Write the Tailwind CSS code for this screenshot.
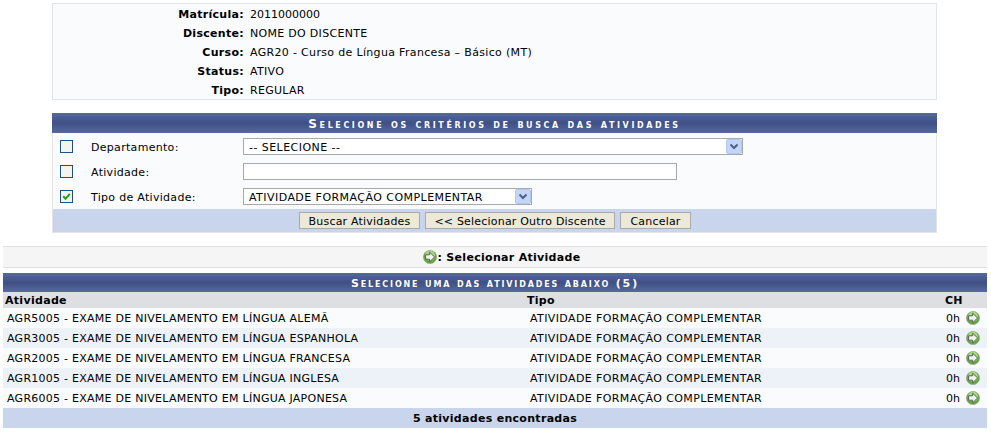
<!DOCTYPE html>
<html lang="pt">
<head>
  <meta charset="UTF-8" />
  <title>Selecionar Atividade</title>
  <script src="https://cdn.jsdelivr.net/npm/@tailwindcss/browser@4"></script>
</head>
<body class="bg-white text-black text-[11px] leading-[14px] tracking-[0.3px] font-['DejaVu_Sans',Verdana,sans-serif] w-[991px] h-[432px] overflow-hidden">
  <svg class="hidden">
    <symbol id="go" viewBox="0 0 14 14">
      <circle cx="7" cy="7" r="6.6" fill="#62a83f" stroke="#9aa894" stroke-width="0.7"/>
      <circle cx="7" cy="5.8" r="5" fill="#a9d983"/>
      <path d="M6.6 2.2 L11.6 7 L6.6 11.8 V9.2 H2.6 V4.8 H6.6 Z" fill="#f4f4f0" stroke="#55634f" stroke-width="1" stroke-linejoin="round"/>
    </symbol>
    <symbol id="arrow" viewBox="0 0 16 15">
      <rect x="0.5" y="0.5" width="15" height="14" rx="1.5" fill="#c3d5f8" stroke="#b4c8ee"/>
      <path d="M4.5 5.5 L8 9 L11.5 5.5" fill="none" stroke="#4d6185" stroke-width="2"/>
    </symbol>
  </svg>

  <div class="pt-[3px] pl-[52px]">
    <!-- dados do discente -->
    <div class="w-[885px] h-[97px] bg-[#f9fbfd] border border-[#e2e4e6] pt-[1px]">
      <div class="grid grid-cols-[191px_1fr] gap-x-[6px] auto-rows-[19px] items-center">
        <b class="text-right">Matrícula:</b><span class="tracking-normal">2011000000</span>
        <b class="text-right">Discente:</b><span>NOME DO DISCENTE</span>
        <b class="text-right">Curso:</b><span class="tracking-[0.33px]">AGR20 - Curso de Língua Francesa – Básico (MT)</span>
        <b class="text-right">Status:</b><span>ATIVO</span>
        <b class="text-right">Tipo:</b><span>REGULAR</span>
      </div>
    </div>

    <!-- criterios de busca -->
    <form class="w-[885px] h-[120px] mt-[13px] border-x border-b border-[#e2e4e6] bg-[#f9fbfd]">
      <div class="-mx-px h-[20px] pt-[2px] flex items-center justify-center text-white font-bold tracking-[2.6px] [font-variant:small-caps] text-[12px] bg-[linear-gradient(#56699c,#3e5085_50%,#56699c)]">Selecione os critérios de busca das atividades</div>
      <div class="pt-[5px] h-[76px]">
        <div class="flex items-center h-[17px] mb-[8px]">
          <input type="checkbox" class="appearance-none size-[13px] ml-[7px] border border-[#1c5180] bg-[#f4f4ee]">
          <label class="ml-[18px] w-[152px] pt-[2px]">Departamento:</label>
          <div class="relative w-[500px] h-[17px]">
            <select class="appearance-none w-full h-full bg-white border border-[#a9a9a9] pl-[5px] pt-[2px] text-[11px] tracking-[0.45px]"><option>-- SELECIONE --</option></select>
            <svg class="absolute right-[1px] top-[1px] w-[16px] h-[15px]"><use href="#arrow"/></svg>
          </div>
        </div>
        <div class="flex items-center h-[17px] mb-[8px]">
          <input type="checkbox" class="appearance-none size-[13px] ml-[7px] border border-[#1c5180] bg-[#f4f4ee]">
          <label class="ml-[18px] w-[152px] pt-[2px]">Atividade:</label>
          <input type="text" class="w-[434px] h-[17px] bg-white border border-[#a9a9a9]">
        </div>
        <div class="flex items-center h-[17px]">
          <span class="relative size-[13px] ml-[7px]">
            <input type="checkbox" checked class="appearance-none block size-[13px] border border-[#1c5180] bg-[#f4f4ee]">
            <svg class="absolute left-[2px] top-[2px] size-[9px]" viewBox="0 0 9 9"><path d="M1.2 4.2 L3.6 6.8 L7.8 1.8" fill="none" stroke="#21a121" stroke-width="2"/></svg>
          </span>
          <label class="ml-[18px] w-[152px] pt-[2px]">Tipo de Atividade:</label>
          <div class="relative w-[289px] h-[17px]">
            <select class="appearance-none w-full h-full bg-white border border-[#a9a9a9] pl-[5px] pt-[2px] text-[11px] tracking-[0.45px]"><option>ATIVIDADE FORMAÇÃO COMPLEMENTAR</option></select>
            <svg class="absolute right-[1px] top-[1px] w-[16px] h-[15px]"><use href="#arrow"/></svg>
          </div>
        </div>
      </div>
      <div class="h-[23px] bg-[#c8d5ec] flex items-center pl-[246px] gap-[5px]">
        <button type="button" class="h-[17px] w-[121px] pt-[2px] bg-[#ece9d8] border border-[#a9a9a9] text-[11px] tracking-[0.2px]">Buscar Atividades</button>
        <button type="button" class="h-[17px] w-[190px] pt-[2px] bg-[#ece9d8] border border-[#a9a9a9] text-[11px] tracking-[0.2px]">&lt;&lt; Selecionar Outro Discente</button>
        <button type="button" class="h-[17px] w-[71px] pt-[2px] bg-[#ece9d8] border border-[#a9a9a9] text-[11px] tracking-[0.2px]">Cancelar</button>
      </div>
    </form>
  </div>

  <div class="pl-[3px] w-[987px]">
    <!-- legenda -->
    <div class="mt-[13px] h-[22px] pl-[13px] bg-[#f5f5f5] border-y border-[#e2e2e2] flex items-center justify-center gap-[1px] font-bold">
      <svg class="size-[14px]"><use href="#go"/></svg><span class="pt-[2px]">: Selecionar Atividade</span>
    </div>

    <!-- resultado -->
    <div class="mt-[5px]">
      <div class="h-[19px] pt-[2px] flex items-center justify-center text-white font-bold tracking-[1.85px] [font-variant:small-caps] text-[11px] bg-[linear-gradient(#56699c,#3e5085_50%,#56699c)]">Selecione uma das atividades abaixo (5)</div>
      <div class="h-[16px] pt-[2px] bg-[#dedfe3] font-bold grid grid-cols-[522px_1fr_42px] items-center pl-[2px]">
        <span>Atividade</span><span>Tipo</span><span>CH</span>
      </div>
      <div class="h-[20px] bg-[#f9fbfd] grid grid-cols-[523px_1fr_auto_21px] items-center pl-[4px]">
        <span class="pt-[2px] tracking-[0.26px]">AGR5005 - EXAME DE NIVELAMENTO EM LÍNGUA ALEMÃ</span><span class="pt-[2px] tracking-[0.39px]">ATIVIDADE FORMAÇÃO COMPLEMENTAR</span><span class="pt-[2px] mr-[6px] tracking-normal">0h</span>
        <svg class="size-[14px]"><use href="#go"/></svg>
      </div>
      <div class="h-[20px] bg-[#edf2f9] grid grid-cols-[523px_1fr_auto_21px] items-center pl-[4px]">
        <span class="pt-[2px] tracking-[0.26px]">AGR3005 - EXAME DE NIVELAMENTO EM LÍNGUA ESPANHOLA</span><span class="pt-[2px] tracking-[0.39px]">ATIVIDADE FORMAÇÃO COMPLEMENTAR</span><span class="pt-[2px] mr-[6px] tracking-normal">0h</span>
        <svg class="size-[14px]"><use href="#go"/></svg>
      </div>
      <div class="h-[20px] bg-[#f9fbfd] grid grid-cols-[523px_1fr_auto_21px] items-center pl-[4px]">
        <span class="pt-[2px] tracking-[0.26px]">AGR2005 - EXAME DE NIVELAMENTO EM LÍNGUA FRANCESA</span><span class="pt-[2px] tracking-[0.39px]">ATIVIDADE FORMAÇÃO COMPLEMENTAR</span><span class="pt-[2px] mr-[6px] tracking-normal">0h</span>
        <svg class="size-[14px]"><use href="#go"/></svg>
      </div>
      <div class="h-[20px] bg-[#edf2f9] grid grid-cols-[523px_1fr_auto_21px] items-center pl-[4px]">
        <span class="pt-[2px] tracking-[0.26px]">AGR1005 - EXAME DE NIVELAMENTO EM LÍNGUA INGLESA</span><span class="pt-[2px] tracking-[0.39px]">ATIVIDADE FORMAÇÃO COMPLEMENTAR</span><span class="pt-[2px] mr-[6px] tracking-normal">0h</span>
        <svg class="size-[14px]"><use href="#go"/></svg>
      </div>
      <div class="h-[20px] bg-[#f9fbfd] grid grid-cols-[523px_1fr_auto_21px] items-center pl-[4px]">
        <span class="pt-[2px] tracking-[0.26px]">AGR6005 - EXAME DE NIVELAMENTO EM LÍNGUA JAPONESA</span><span class="pt-[2px] tracking-[0.39px]">ATIVIDADE FORMAÇÃO COMPLEMENTAR</span><span class="pt-[2px] mr-[6px] tracking-normal">0h</span>
        <svg class="size-[14px]"><use href="#go"/></svg>
      </div>
      <div class="h-[20px] pt-[2px] bg-[#c8d5ec] flex items-center justify-center font-bold">5 atividades encontradas</div>
    </div>
  </div>
</body>
</html>
